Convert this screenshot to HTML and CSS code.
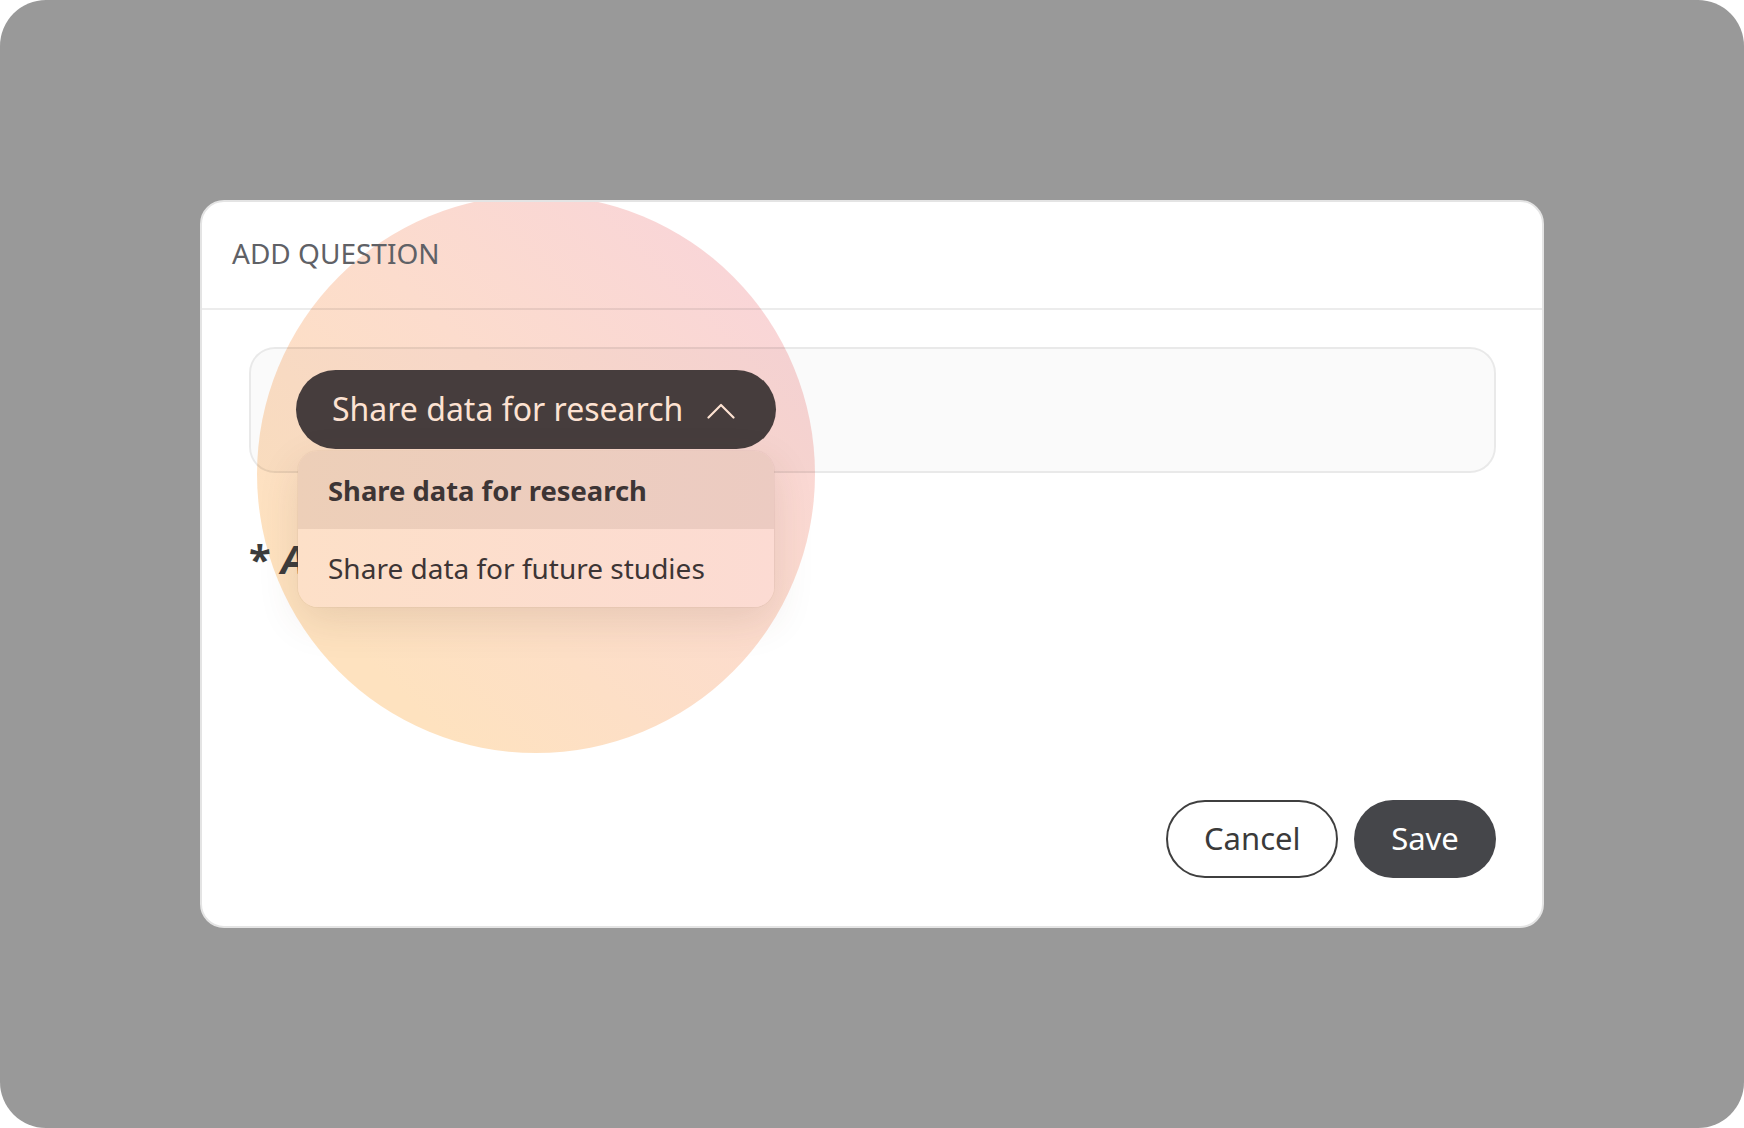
FILE: index.html
```html
<!DOCTYPE html>
<html lang="en">
<head>
<meta charset="utf-8">
<title>Add question</title>
<link rel="stylesheet" href="styles.css">
</head>
<body>
<div class="stage">
  <div class="modal">
    <div class="spotlight"></div>
    <div class="modal-header">ADD QUESTION</div>
    <div class="modal-body">
      <div class="field">
        <div class="select">
          <button class="select-btn" type="button">
            <span>Share data for research</span>
            <svg class="chev" width="28" height="16" viewBox="0 0 28 16"><polyline points="1.5,14.5 14,2 26.5,14.5" fill="none" stroke="currentColor" stroke-width="2.2" stroke-linecap="round" stroke-linejoin="round"/></svg>
          </button>
          <ul class="menu">
            <li class="menu-item active">Share data for research</li>
            <li class="menu-item">Share data for future studies</li>
          </ul>
        </div>
      </div>
      <div class="label"><span class="star">*</span> <em>Answer</em></div>
      <div class="footer">
        <button class="btn btn-outline" type="button">Cancel</button>
        <button class="btn btn-dark" type="button">Save</button>
      </div>
    </div>
  </div>
</div>
</body>
</html>
```

FILE: styles.css
```css
html, body {
  margin: 0;
  padding: 0;
  background: #ffffff;
}
body {
  font-family: "Noto Sans", "Open Sans", sans-serif;
}
.stage {
  width: 1744px;
  height: 1128px;
  box-sizing: border-box;
  background: #999999;
  border-radius: 46px;
  padding: 200px 0 0 200px;
}
.modal {
  position: relative;
  width: 1344px;
  height: 728px;
  box-sizing: border-box;
  background: #ffffff;
  border: 2px solid #e4e4e4;
  border-radius: 24px;
  overflow: hidden;
  display: flex;
  flex-direction: column;
}
.spotlight {
  position: absolute;
  left: 55px;
  top: -7px;
  width: 558px;
  height: 558px;
  border-radius: 50%;
  background: linear-gradient(45deg, #fee2bf 18%, #fcdccd 55%, #f9d5d8 88%);
  z-index: 0;
}
.modal-header {
  position: relative;
  z-index: 1;
  height: 108px;
  flex: none;
  box-sizing: border-box;
  display: flex;
  align-items: center;
  padding: 0 30px 4px;
  border-bottom: 2px solid rgba(0, 0, 0, 0.075);
  font-size: 28px;
  color: #5f6166;
  letter-spacing: 0;
}
.modal-body {
  position: relative;
  z-index: 1;
  flex: 1;
  display: flex;
  flex-direction: column;
  padding: 37px 46px 48px 47px;
}
.field {
  height: 126px;
  box-sizing: border-box;
  border: 2px solid rgba(0, 0, 0, 0.07);
  background: rgba(0, 0, 0, 0.018);
  border-radius: 26px;
  padding: 21px 0 0 45px;
}
.select {
  position: relative;
  display: inline-block;
  z-index: 3;
}
.select-btn {
  height: 79px;
  display: flex;
  align-items: center;
  gap: 24px;
  padding: 0 41px 0 36px;
  border: none;
  border-radius: 40px;
  background: #463d3d;
  color: #fde2d2;
  font-family: "Noto Sans", sans-serif;
  font-size: 32px;
  cursor: pointer;
}
.select-btn span {
  line-height: 1;
  padding-bottom: 2px;
}
.chev {
  display: block;
  margin-top: 2px;
}
.menu {
  position: absolute;
  left: 2px;
  top: calc(100% + 2px);
  width: 476px;
  margin: 0;
  padding: 0;
  list-style: none;
  border-radius: 20px;
  overflow: hidden;
  background: linear-gradient(to right, #fde0c8, #fcdbd3);
  box-shadow: 0 14px 40px rgba(90, 60, 50, 0.13), 0 0 0 1px rgba(120, 80, 60, 0.05);
}
.menu-item {
  height: 78px;
  display: flex;
  align-items: center;
  padding-left: 30px;
  font-size: 28px;
  color: #3d3535;
}
.menu-item.active {
  font-weight: 700;
  font-size: 27.4px;
  background: rgba(70, 35, 25, 0.085);
}
.label {
  margin-top: 62px;
  font-size: 40px;
  line-height: 48px;
  font-weight: 700;
  color: #3c3c3c;
}
.label em {
  font-style: italic;
}
.footer {
  margin-top: auto;
  display: flex;
  justify-content: flex-end;
  gap: 16px;
}
.btn {
  height: 78px;
  box-sizing: border-box;
  border-radius: 40px;
  font-family: "Noto Sans", sans-serif;
  font-size: 31px;
  padding: 0 36px 3px;
  cursor: pointer;
}
.btn-outline {
  width: 172px;
  background: #ffffff;
  border: 2px solid #3f3f3f;
  color: #3a3a3a;
}
.btn-dark {
  width: 142px;
  background: #45464a;
  border: none;
  color: #ffffff;
}
```
